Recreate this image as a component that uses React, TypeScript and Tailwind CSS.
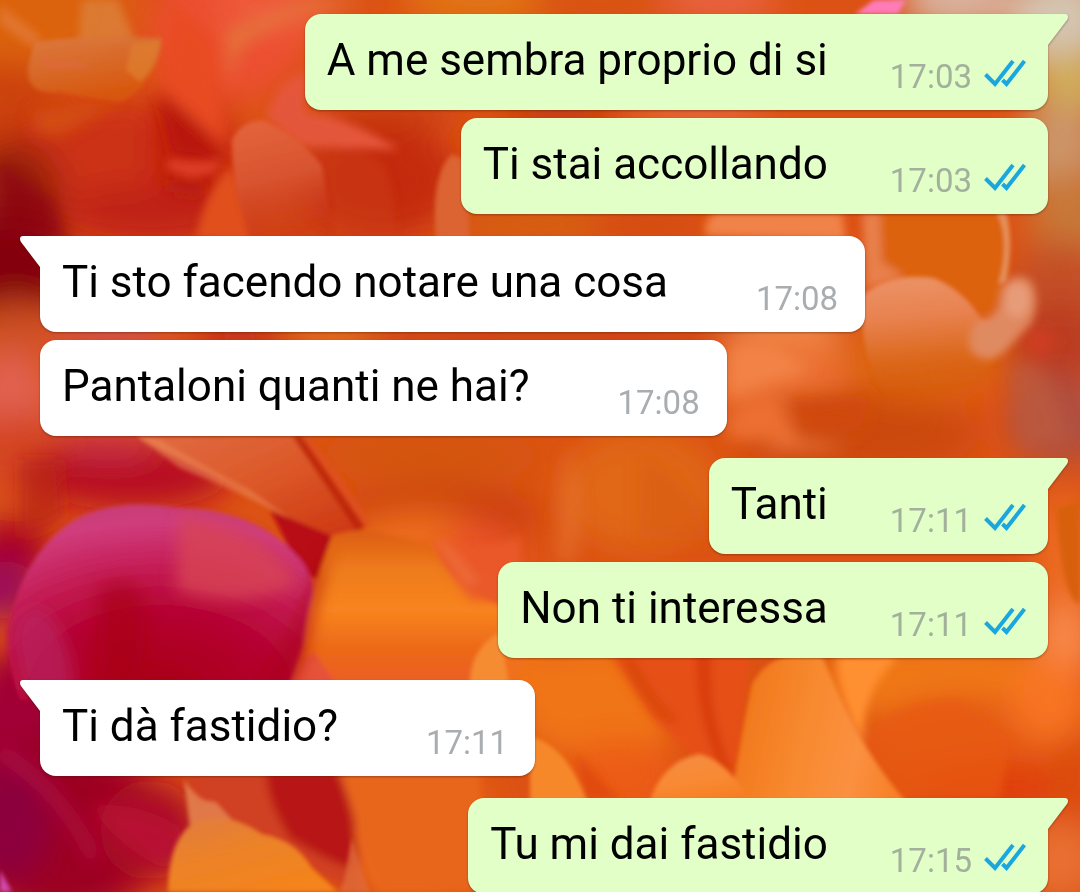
type Message = {
  text: string;
  time: string;
  sent: boolean;
  first: boolean;
};

const messages: Message[] = [
  { text: "A me sembra proprio di si", time: "17:03", sent: true, first: true },
  { text: "Ti stai accollando", time: "17:03", sent: true, first: false },
  { text: "Ti sto facendo notare una cosa", time: "17:08", sent: false, first: true },
  { text: "Pantaloni quanti ne hai?", time: "17:08", sent: false, first: false },
  { text: "Tanti", time: "17:11", sent: true, first: true },
  { text: "Non ti interessa", time: "17:11", sent: true, first: false },
  { text: "Ti dà fastidio?", time: "17:11", sent: false, first: true },
  { text: "Tu mi dai fastidio", time: "17:15", sent: true, first: true },
];

// Broad colour patches: [cx, cy, rx, ry, fill]
const patches: [number, number, number, number, string][] = [
  [40, 10, 90, 60, "#dc640c"],
  [10, 110, 50, 50, "#cc4208"],
  [230, 30, 80, 70, "#ec5030"],
  [120, 160, 130, 60, "#cc3216"],
  [10, 190, 50, 50, "#98200c"],
  [10, 265, 60, 55, "#84000c"],
  [190, 150, 40, 60, "#c42410"],
  [150, 215, 90, 30, "#c02418"],
  [380, 180, 80, 60, "#c42c10"],
  [280, 10, 60, 20, "#f06040"],
  [480, 0, 80, 20, "#e27a14"],
  [600, 0, 70, 16, "#d85408"],
  [720, 0, 60, 16, "#ec6850"],
  [390, 113, 80, 12, "#c83c14"],
  [560, 113, 60, 12, "#b83010"],
  [700, 113, 70, 12, "#e87048"],
  [960, 0, 60, 30, "#d8b4a0"],
  [1060, 20, 50, 50, "#d4c4b0"],
  [1070, 85, 40, 35, "#d0ac58"],
  [1060, 150, 40, 50, "#cc9468"],
  [1070, 220, 40, 50, "#c87838"],
  [540, 225, 90, 18, "#d46010"],
  [650, 225, 60, 18, "#d44c10"],
  [1060, 290, 50, 50, "#c45028"],
  [1060, 345, 50, 45, "#bc3c20"],
  [1060, 420, 50, 45, "#b05040"],
  [920, 360, 90, 40, "#dc6410"],
  [780, 330, 60, 30, "#f08848"],
  [780, 380, 70, 40, "#ec7030"],
  [860, 435, 120, 40, "#cc4a0c"],
  [15, 330, 30, 30, "#cc5020"],
  [10, 395, 40, 45, "#e06050"],
  [20, 455, 60, 40, "#d44420"],
  [110, 335, 60, 12, "#cc5060"],
  [240, 336, 50, 12, "#b81c1c"],
  [340, 336, 50, 10, "#e48028"],
  [550, 336, 200, 10, "#c43814"],
  [130, 475, 100, 35, "#b81024"],
  [110, 445, 50, 12, "#c83050"],
  [10, 550, 40, 30, "#a80428"],
  [0, 590, 40, 30, "#9c0858"],
  [20, 720, 60, 70, "#a00434"],
  [60, 830, 110, 90, "#9c0020"],
  [10, 820, 40, 60, "#8c003c"],
  [150, 830, 50, 50, "#ac0828"],
  [430, 455, 110, 30, "#d4540c"],
  [440, 515, 100, 26, "#c83c0c"],
  [640, 490, 80, 60, "#e06814"],
  [420, 570, 100, 60, "#ec6c1c"],
  [480, 560, 40, 40, "#ea5228"],
  [430, 660, 120, 50, "#f0701c"],
  [600, 700, 90, 60, "#f07414"],
  [1065, 560, 30, 70, "#ec6c24"],
  [1065, 640, 30, 40, "#f88848"],
  [620, 780, 60, 40, "#ec5c14"],
  [940, 680, 130, 40, "#f07812"],
  [970, 735, 100, 40, "#e45c14"],
  [1000, 790, 90, 30, "#e04010"],
  [1050, 700, 40, 40, "#f87424"],
  [1075, 780, 30, 40, "#dc4c10"],
  [1060, 860, 40, 40, "#e87030"],
  [410, 820, 80, 80, "#e86218"],
];

function Wallpaper() {
  return (
    <svg
      className="absolute inset-0 h-full w-full"
      viewBox="0 0 1080 892"
      preserveAspectRatio="xMidYMid slice"
      aria-hidden="true"
    >
      <defs>
        <filter id="haze" x="-40%" y="-40%" width="180%" height="180%">
          <feGaussianBlur stdDeviation="16" />
        </filter>
        <filter id="soft" x="-30%" y="-30%" width="160%" height="160%">
          <feGaussianBlur stdDeviation="8" />
        </filter>
        <filter id="mid" x="-20%" y="-20%" width="140%" height="140%">
          <feGaussianBlur stdDeviation="4" />
        </filter>
        <filter id="edge" x="-10%" y="-10%" width="120%" height="120%">
          <feGaussianBlur stdDeviation="2" />
        </filter>
        <linearGradient id="leaf" x1="0" y1="0" x2="0.4" y2="1">
          <stop offset="0" stopColor="#dc7c44" />
          <stop offset="0.5" stopColor="#d86c2c" />
          <stop offset="1" stopColor="#d8580c" />
        </linearGradient>
        <linearGradient id="bud" x1="0.2" y1="0" x2="0.4" y2="1">
          <stop offset="0" stopColor="#e4643c" />
          <stop offset="0.5" stopColor="#d85430" />
          <stop offset="1" stopColor="#c43014" stopOpacity="0.5" />
        </linearGradient>
        <radialGradient id="berry" cx="0.5" cy="0.95" r="0.95">
          <stop offset="0" stopColor="#a80014" />
          <stop offset="0.4" stopColor="#b40030" />
          <stop offset="0.65" stopColor="#c41c54" />
          <stop offset="0.9" stopColor="#d03c7c" />
          <stop offset="1" stopColor="#c83c78" />
        </radialGradient>
        <linearGradient id="coral" x1="0" y1="0" x2="1" y2="1">
          <stop offset="0" stopColor="#e06c44" />
          <stop offset="0.5" stopColor="#dc5828" />
          <stop offset="1" stopColor="#cc3410" />
        </linearGradient>
        <linearGradient id="amber" x1="0" y1="0" x2="0" y2="1">
          <stop offset="0" stopColor="#dc5c14" />
          <stop offset="0.25" stopColor="#ee7c1c" />
          <stop offset="0.5" stopColor="#f88420" />
          <stop offset="0.75" stopColor="#ec6818" />
          <stop offset="1" stopColor="#ec5c28" />
        </linearGradient>
        <linearGradient id="peach" x1="0.3" y1="0" x2="0.6" y2="1">
          <stop offset="0" stopColor="#f48c40" />
          <stop offset="0.5" stopColor="#f98a34" />
          <stop offset="1" stopColor="#f67c20" />
        </linearGradient>
        <linearGradient id="honey" x1="0" y1="0.3" x2="1" y2="0.5">
          <stop offset="0" stopColor="#f07418" />
          <stop offset="0.45" stopColor="#f88a30" />
          <stop offset="0.75" stopColor="#fa9040" />
          <stop offset="1" stopColor="#f88028" />
        </linearGradient>
        <linearGradient id="gourd" x1="0" y1="0" x2="0.6" y2="1">
          <stop offset="0" stopColor="#e07c40" />
          <stop offset="0.5" stopColor="#ec8228" />
          <stop offset="1" stopColor="#f4841c" />
        </linearGradient>
        <linearGradient id="apricot" x1="0" y1="0" x2="0.1" y2="1">
          <stop offset="0" stopColor="#ec9468" />
          <stop offset="0.35" stopColor="#e88250" />
          <stop offset="0.7" stopColor="#dc681c" />
          <stop offset="1" stopColor="#d05810" stopOpacity="0" />
        </linearGradient>
      </defs>

      <rect width="1080" height="892" fill="#dc5214" />
      <g filter="url(#haze)">
        {patches.map(([cx, cy, rx, ry, fill], i) => (
          <ellipse key={i} cx={cx} cy={cy} rx={rx} ry={ry} fill={fill} />
        ))}
      </g>

      {/* Top left petals */}
      <g filter="url(#soft)">
        <path d="M172 0 L215 40 L225 120 L226 160 L190 150 L160 100 L166 50Z" fill="#e84c24" />
        <path d="M156 90 L172 100 L206 130 L226 150 L220 160 L172 156Z" fill="#b8180c" />
        <path d="M232 110 Q224 60 256 36 L300 14 L380 0 L310 0 L225 30Z" fill="#e4783c" opacity="0.8" />
        <path d="M34 110 L120 100 L60 136 L34 132Z" fill="#d4540c" opacity="0.8" />
        <path d="M0 160 L54 200 L66 240 L0 240Z" fill="#8c0810" opacity="0.7" />
        <path d="M168 178 L210 182 L200 196 L170 192Z" fill="#b01c10" opacity="0.7" />
        <path d="M20 460 L60 460 L64 520 L20 540Z" fill="#b42018" opacity="0.6" />
      </g>
      <g filter="url(#mid)">
        <path d="M0 4 L20 20 L44 40 L30 46 L0 24Z" fill="#e47c3c" opacity="0.7" />
        <path d="M82 0 L118 0 L136 44 L78 44Z" fill="#dc803c" opacity="0.8" />
        <path d="M168 158 Q196 164 220 160 L216 172 L192 178 L168 170Z" fill="#dc3c28" />
        <path d="M196 240 Q204 190 232 166 L262 240Z" fill="#e0501c" />
        <path d="M266 118 Q274 84 306 70 L306 112 Q350 118 400 150 L300 146Z" fill="#e4563a" />
        <path d="M308 148 Q352 142 384 164 Q398 200 394 240 L334 240 Q334 190 308 148Z" fill="#cc3c1c" opacity="0.5" />
      </g>
      <g filter="url(#edge)">
        <path
          d="M34 42 Q88 34 162 38 Q160 66 144 82 Q132 100 118 102 L60 92 Q26 96 28 68Z"
          fill="url(#leaf)"
          opacity="0.9"
        />
        <path d="M132 44 L160 40 Q158 66 140 82 L126 70Z" fill="#e08030" opacity="0.7" />
        <path d="M40 58 L82 62 L90 68 L44 68Z" fill="#e06840" opacity="0.6" />
        <path d="M232 140 Q240 122 262 120 Q300 136 322 166 L334 240 L250 240 Q232 190 232 140Z" fill="url(#bud)" />
        <path d="M436 240 Q430 174 452 154 L466 160 L470 240Z" fill="#dc6430" />
        <path d="M855 14 L874 0 L906 0 L898 14Z" fill="#ff7cb8" />
      </g>

      {/* Right hand petals */}
      <g filter="url(#mid)">
        <path d="M706 236 Q702 220 716 212 L842 212 L846 240Z" fill="#f0834a" />
        <path d="M880 212 L1000 212 Q1012 244 1002 300 L984 320 Q950 280 870 284Z" fill="#dc6210" />
        <path d="M862 212 L880 212 L882 262 L904 276 L866 290Z" fill="#e8804c" />
      </g>
      <g filter="url(#edge)">
        <path d="M996 212 L1006 212 Q1014 240 1006 282 L998 284 Q1010 240 996 212Z" fill="#e4905c" />
        <path
          d="M864 294 Q890 272 934 278 Q966 292 982 320 Q994 322 1000 330 Q990 380 960 400 L890 400 Q856 360 864 294Z"
          fill="url(#apricot)"
        />
      </g>
      <g filter="url(#mid)">
        <path d="M1000 290 Q1012 270 1030 280 Q1042 300 1030 326 L1010 346 Q990 370 970 350 Q966 320 988 318 Q1000 310 1000 290Z" fill="#e08a62" />
        <path d="M1006 290 Q1016 276 1028 290 Q1032 306 1020 318 L1006 312Z" fill="#e8a080" opacity="0.8" />
      </g>
      <g filter="url(#soft)">
        <path d="M727 346 Q780 336 810 372 L760 386 L727 400Z" fill="#f4884c" opacity="0.8" />
        <path d="M727 420 Q750 390 776 398 L800 440 L727 440Z" fill="#ec7030" />
        <path d="M788 400 L870 396 L860 430 L800 430Z" fill="#d04a0c" />
        <path d="M760 450 Q790 430 850 450Z" fill="#e8743c" />
        <path d="M1008 370 Q1030 350 1050 380 L1070 440 L1020 450Z" fill="#bc5c40" opacity="0.7" />
        <ellipse cx="1040" cy="342" rx="14" ry="12" fill="#d43c20" />
      </g>

      {/* Centre folds and the magenta petal */}
      <g filter="url(#edge)">
        <path d="M136 436 L304 436 Q330 480 364 530 L328 536 Q290 524 244 490 Q190 466 136 436Z" fill="url(#coral)" />
        <path d="M136 436 L160 440 Q210 470 250 490 L292 520 Q240 492 180 468Z" fill="#ec8858" opacity="0.55" />
        <path d="M292 436 L302 436 Q336 486 366 526 L356 530 Q322 480 292 436Z" fill="#bc2408" opacity="0.85" />
        <path d="M304 436 L316 446 Q346 480 370 524 L366 528 Q336 486 304 436Z" fill="#e05020" opacity="0.8" />
        <path d="M270 510 L332 536 L318 580 L300 570Z" fill="#b80c14" />
        <path
          d="M8 630 Q20 560 68 524 Q108 496 180 508 Q262 510 304 564 Q322 590 304 640 L288 690 L20 700 Q6 666 8 630Z"
          fill="url(#berry)"
        />
        <path
          d="M332 536 Q344 530 368 530 L430 544 Q456 590 500 604 L500 690 L292 690 Q312 660 304 640 Q308 600 332 536Z"
          fill="url(#amber)"
        />
        <path d="M288 690 Q300 658 314 652 L340 690Z" fill="#e44c44" opacity="0.7" />
        <path d="M470 690 Q468 650 500 632 L510 690Z" fill="#f68c30" />
      </g>
      <g filter="url(#mid)">
        <path d="M434 540 Q480 556 520 536 L520 604 L470 600 Q444 570 434 540Z" fill="#ea5a2c" opacity="0.85" />
        <path d="M436 538 L452 548 L480 582 L466 586 Q446 562 436 538Z" fill="#f07840" opacity="0.5" />
      </g>
      <g filter="url(#soft)">
        <path d="M568 446 Q588 510 576 562 L554 562 Q560 500 568 446Z" fill="#ec8040" opacity="0.4" />
        <path d="M640 456 Q700 480 708 540 L640 540Z" fill="#d85c0c" opacity="0.6" />
        <path d="M14 640 Q20 600 44 610 Q74 640 74 690 L24 690Z" fill="#b82460" opacity="0.7" />
        <path d="M180 516 Q270 530 298 584 Q240 612 176 590Z" fill="#d84454" opacity="0.8" />
        <path d="M98 590 Q130 570 146 600 L140 690 L100 690Z" fill="#a80018" opacity="0.6" />
        <path d="M256 680 Q300 630 310 580 L330 548 L306 650 L290 690Z" fill="#a80410" opacity="0.6" />
        <path d="M0 742 Q60 776 100 850 L90 870 Q60 800 0 762Z" fill="#b8104c" opacity="0.5" />
        <path d="M90 806 Q140 800 184 830 L168 870 Q120 850 90 806Z" fill="#bc1038" opacity="0.7" />
      </g>
      <path d="M0 870 L12 892 L0 892Z" fill="#d04cb0" filter="url(#edge)" />

      {/* Lower petals */}
      <g filter="url(#mid)">
        <path d="M184 770 L350 770 Q366 820 356 892 L330 880 L200 812Z" fill="#d04024" />
        <path d="M266 770 L336 770 Q360 820 354 870 Q324 860 290 838 Q266 800 266 770Z" fill="#b81814" />
        <path d="M340 770 L480 770 L480 892 L376 892 Q352 850 356 820Z" fill="#e8661e" />
        <path d="M608 650 L750 650 Q742 720 736 782 Q680 750 650 716Z" fill="#e65014" />
        <path d="M696 650 L712 650 Q706 710 732 770 L726 778 Q696 730 696 650Z" fill="#d83c0c" />
        <path d="M620 656 L636 660 Q656 700 680 720 L668 724 Q636 700 620 656Z" fill="#d84810" opacity="0.8" />
        <path d="M574 752 L592 770 L620 800 L586 800Z" fill="#e04c10" />
        <path d="M836 656 L900 656 Q860 690 864 744Q844 720 836 656Z" fill="#ff9030" />
        <path d="M864 744 Q884 700 960 700 L1010 740 L1000 800 L900 800Z" fill="#e85814" opacity="0.7" />
      </g>
      <g filter="url(#edge)">
        <path d="M184 780 Q196 796 204 800 L216 802 L238 826 L190 828Z" fill="#e07848" />
        <path
          d="M168 892 Q168 836 198 820 Q230 812 262 834 Q296 840 312 868 L338 892Z"
          fill="url(#gourd)"
        />
        <path d="M352 838 Q362 870 370 892 L340 892 L344 880Z" fill="#e06c38" opacity="0.8" />
        <path d="M530 736 Q568 746 588 804 L530 804Z" fill="#f6882c" />
        <path
          d="M730 804 Q744 720 752 684 Q768 656 800 654 L822 656 Q836 690 858 732 Q878 770 910 806Z"
          fill="url(#honey)"
        />
        <path d="M648 806 Q662 760 700 754 Q730 762 752 806Z" fill="url(#peach)" />
        <path d="M1056 508 Q1062 600 1080 604 L1080 500Z" fill="#d8600c" />
      </g>
    </svg>
  );
}

function Tail({ sent }: { sent: boolean }) {
  return (
    <svg
      viewBox="0 0 20 32"
      aria-hidden="true"
      className={
        sent
          ? "absolute top-0 left-full h-8 w-5 fill-[#e1ffc7]"
          : "absolute top-0 right-full h-8 w-5 -scale-x-100 fill-white"
      }
    >
      <path d="M-1 0 H17 Q20 0 20 3 Q20 4.500 19 6 L0 31 H-1Z" />
    </svg>
  );
}

function ReadTicks() {
  return (
    <svg
      viewBox="0 0 42 28"
      role="img"
      aria-label="Letto"
      className="h-7 w-[42px] fill-none stroke-[#1aa7e0] stroke-[4]"
    >
      <path d="M1.500 15.500 L11 25 L29 2" />
      <path d="M18.500 21 L22.500 25 L40.500 2" />
    </svg>
  );
}

function Bubble({ message }: { message: Message }) {
  const { text, time, sent, first } = message;
  const shape = sent
    ? first
      ? "bg-[#e1ffc7] rounded-2xl rounded-tr-none pr-[22px] gap-[62px]"
      : "bg-[#e1ffc7] rounded-2xl pr-[22px] gap-[62px]"
    : first
      ? "bg-white rounded-2xl rounded-tl-none pr-[27px] gap-[88px]"
      : "bg-white rounded-2xl pr-[27px] gap-[88px]";

  return (
    <li className={`${sent ? "self-end" : "self-start"} ${first ? "mt-[22px] first:mt-0" : "mt-2"}`}>
      <div
        className={`relative flex h-24 items-start pl-[22px] drop-shadow-[0_1px_1px_rgba(60,20,0,0.4)] ${shape}`}
      >
        {first && <Tail sent={sent} />}
        <p className="pt-5 text-[44px] leading-[52px] whitespace-nowrap text-black">{text}</p>
        <div className="flex items-start gap-3 pt-[43px]">
          <time className={`text-[33px] leading-10 ${sent ? "text-[#a3b09c]" : "text-[#a9adb0]"}`}>{time}</time>
          {sent && (
            <span className="pt-0.5">
              <ReadTicks />
            </span>
          )}
        </div>
      </div>
    </li>
  );
}

export default function App() {
  return (
    <main className="relative h-screen overflow-hidden font-['Roboto',sans-serif]">
      <Wallpaper />
      <ol className="relative flex flex-col pt-3.5 pr-8 pl-10">
        {messages.map((message) => (
          <Bubble key={message.text} message={message} />
        ))}
      </ol>
    </main>
  );
}
